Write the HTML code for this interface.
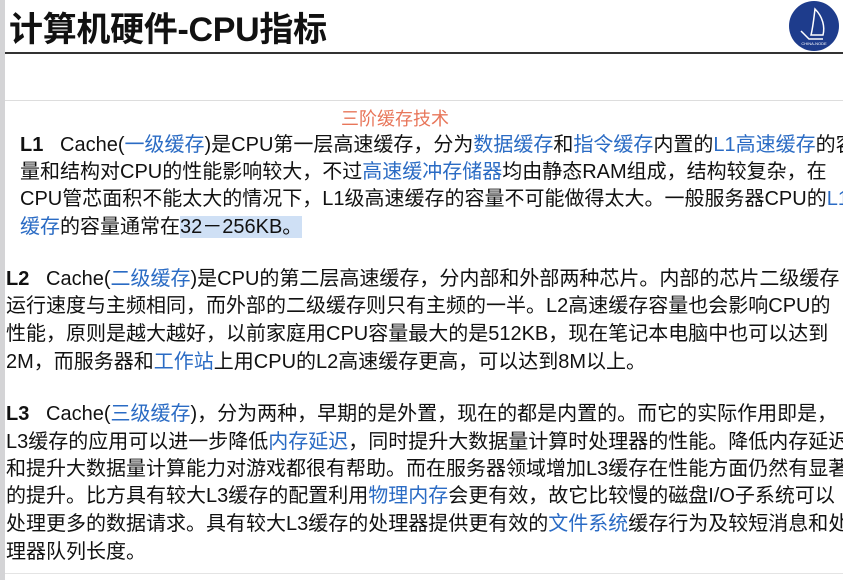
<!DOCTYPE html>
<html><head><meta charset="utf-8"><style>
html,body{margin:0;padding:0;width:843px;height:580px;overflow:hidden;background:#fff;position:relative;font-family:"Liberation Sans","Noto Sans CJK SC",sans-serif;color:#111;}
.strip{position:absolute;left:0;top:0;width:5px;height:580px;background:#d4d4d6;}
.title{position:absolute;left:9px;top:2px;font-size:34px;font-weight:bold;letter-spacing:-0.3px;white-space:nowrap;}
.hr1{position:absolute;left:5px;right:0;top:52px;height:2px;background:#333;}
.hr2{position:absolute;left:5px;right:0;top:100px;height:1px;background:#ddd;}
.hr3{position:absolute;left:5px;right:0;top:573px;height:1px;background:#e4e4e4;}
.logo{position:absolute;left:789px;top:1px;width:50px;height:50px;border-radius:50%;background:#1e3c8c;}
.l{position:absolute;white-space:nowrap;font-size:20px;line-height:27px;}
.b{color:#2a6bc4;}
.sub{position:absolute;left:341px;top:105px;font-size:18px;color:#e8765a;white-space:nowrap;}
.hl{background:#cfe0f5;}
</style></head><body>
<div class="strip"></div>
<div class="title">计算机硬件-CPU指标</div>
<div class="logo"><svg width="50" height="50" viewBox="0 0 50 50"><path d="M26 8 C34 16 36 26 34 34 L22 34 C24 26 25 16 26 8Z" fill="none" stroke="#fff" stroke-width="1.5"/><path d="M12 30 L20 38 L34 38" fill="none" stroke="#fff" stroke-width="1.5"/><text x="25" y="44" font-size="4" fill="#fff" text-anchor="middle" font-family="Liberation Sans">CHINA-NODE</text></svg></div>
<div class="hr1"></div>
<div class="hr2"></div>
<div class="sub">三阶缓存技术</div>
<div class="l" style="left:20px;top:132px"><b>L1</b>&nbsp;&nbsp;&nbsp;Cache(<span class="b">一级缓存</span>)是CPU第一层高速缓存，分为<span class="b">数据缓存</span>和<span class="b">指令缓存</span>内置的<span class="b">L1高速缓存</span>的容</div>
<div class="l" style="left:20px;top:159px">量和结构对CPU的性能影响较大，不过<span class="b">高速缓冲存储器</span>均由静态RAM组成，结构较复杂，在</div>
<div class="l" style="left:20px;top:186px">CPU管芯面积不能太大的情况下，L1级高速缓存的容量不可能做得太大。一般服务器CPU的<span class="b">L1</span></div>
<div class="l" style="left:20px;top:214px"><span class="b">缓存</span>的容量通常在<span class="hl">32－256KB。</span></div>
<div class="l" style="left:6px;top:266px"><b>L2</b>&nbsp;&nbsp;&nbsp;Cache(<span class="b">二级缓存</span>)是CPU的第二层高速缓存，分内部和外部两种芯片。内部的芯片二级缓存</div>
<div class="l" style="left:6px;top:293px">运行速度与主频相同，而外部的二级缓存则只有主频的一半。L2高速缓存容量也会影响CPU的</div>
<div class="l" style="left:6px;top:321px">性能，原则是越大越好，以前家庭用CPU容量最大的是512KB，现在笔记本电脑中也可以达到</div>
<div class="l" style="left:6px;top:349px">2M，而服务器和<span class="b">工作站</span>上用CPU的L2高速缓存更高，可以达到8M以上。</div>
<div class="l" style="left:6px;top:401px"><b>L3</b>&nbsp;&nbsp;&nbsp;Cache(<span class="b">三级缓存</span>)，分为两种，早期的是外置，现在的都是内置的。而它的实际作用即是，</div>
<div class="l" style="left:6px;top:429px">L3缓存的应用可以进一步降低<span class="b">内存延迟</span>，同时提升大数据量计算时处理器的性能。降低内存延迟</div>
<div class="l" style="left:6px;top:456px">和提升大数据量计算能力对游戏都很有帮助。而在服务器领域增加L3缓存在性能方面仍然有显著</div>
<div class="l" style="left:6px;top:483px">的提升。比方具有较大L3缓存的配置利用<span class="b">物理内存</span>会更有效，故它比较慢的磁盘I/O子系统可以</div>
<div class="l" style="left:6px;top:511px">处理更多的数据请求。具有较大L3缓存的处理器提供更有效的<span class="b">文件系统</span>缓存行为及较短消息和处</div>
<div class="l" style="left:6px;top:539px">理器队列长度。</div>
<div class="hr3"></div>
</body></html>
